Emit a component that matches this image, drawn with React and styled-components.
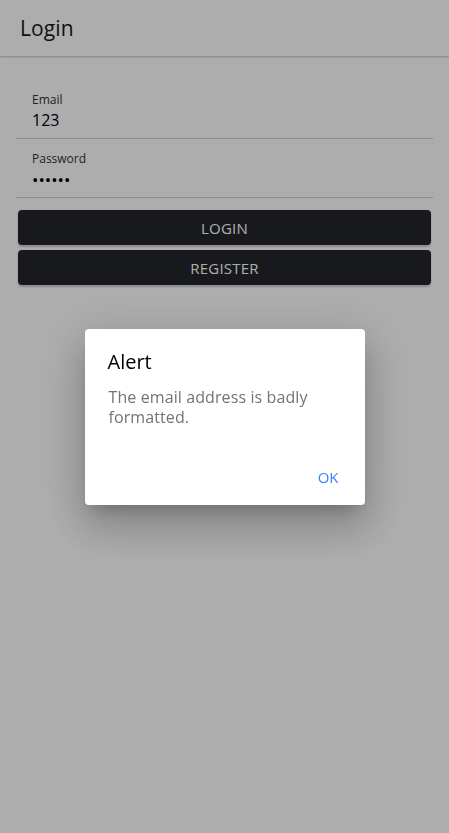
import styled, { createGlobalStyle } from 'styled-components';

const GlobalStyle = createGlobalStyle`
  html, body {
    margin: 0;
    padding: 0;
    height: 100%;
    background: #ffffff;
    font-family: 'Open Sans', 'Noto Sans', sans-serif;
  }
  #root {
    min-height: 100%;
  }
`;

const Page = styled.div`
  position: relative;
  min-height: 100vh;
  background: #ffffff;
`;

const Header = styled.header`
  height: 56px;
  display: flex;
  align-items: center;
  padding: 0 20px;
  box-sizing: border-box;
  background: #ffffff;
  box-shadow: 0 1px 2px rgba(0, 0, 0, 0.25);
  .title {
    font-size: 21px;
    font-weight: 400;
    color: #1a1a1a;
    letter-spacing: 0.1px;
  }
`;

const Form = styled.form`
  padding: 24px 16px 0 16px;
  display: flex;
  flex-direction: column;
`;

const Field = styled.label`
  display: flex;
  flex-direction: column;
  padding: 12px 16px 0 16px;
  height: 59px;
  box-sizing: border-box;
  border-bottom: 1px solid #d0d0d0;
  .label {
    font-size: 12px;
    color: #333;
    line-height: 16px;
  }
  .value {
    margin-top: ${({ secret }) => (secret ? '3px' : '2px')};
    font-size: ${({ secret }) => (secret ? '17px' : '16px')};
    color: #000;
    line-height: 20px;
  }
`;

const ButtonGroup = styled.div`
  display: flex;
  flex-direction: column;
  gap: 5px;
  padding: 12px 2px 0 2px;
`;

const Button = styled.button`
  height: 35px;
  border: none;
  border-radius: 4px;
  background: #24262b;
  color: #ffffff;
  font-family: 'Open Sans', 'Noto Sans', sans-serif;
  font-size: 15px;
  font-weight: 500;
  letter-spacing: 0.2px;
  box-shadow: 0 2px 2px rgba(0, 0, 0, 0.2);
`;

const Backdrop = styled.div`
  position: fixed;
  inset: 0;
  background: rgba(0, 0, 0, 0.32);
  display: flex;
  align-items: center;
  justify-content: center;
`;

const Dialog = styled.div`
  width: 280px;
  height: 176px;
  box-sizing: border-box;
  background: #ffffff;
  border-radius: 4px;
  box-shadow: 0 11px 15px -7px rgba(0, 0, 0, 0.2), 0 24px 38px 3px rgba(0, 0, 0, 0.14),
    0 9px 46px 8px rgba(0, 0, 0, 0.12);
  display: flex;
  flex-direction: column;
  .dialog_title {
    margin: 0;
    padding: 20px 23px 12px 23px;
    font-size: 20px;
    font-weight: 400;
    color: #000;
    line-height: 26px;
  }
  .dialog_message {
    margin: 0;
    padding: 0 24px;
    font-size: 16px;
    line-height: 20px;
    color: #737373;
    letter-spacing: 0.1px;
  }
`;

const DialogActions = styled.div`
  margin-top: auto;
  display: flex;
  justify-content: flex-end;
  padding: 0 8px 8px 8px;
  button {
    background: none;
    border: none;
    padding: 10px 18px;
    font-family: 'Open Sans', 'Noto Sans', sans-serif;
    font-size: 15px;
    color: #3880ff;
    line-height: 20px;
  }
`;

const App = () => {
  return (
    <Page>
      <GlobalStyle />
      <Header>
        <span className="title">Login</span>
      </Header>
      <Form onSubmit={(e) => e.preventDefault()}>
        <Field>
          <span className="label">Email</span>
          <span className="value">123</span>
        </Field>
        <Field secret>
          <span className="label">Password</span>
          <span className="value">••••••</span>
        </Field>
        <ButtonGroup>
          <Button type="submit">LOGIN</Button>
          <Button type="button">REGISTER</Button>
        </ButtonGroup>
      </Form>
      <Backdrop>
        <Dialog>
          <h2 className="dialog_title">Alert</h2>
          <p className="dialog_message">The email address is badly formatted.</p>
          <DialogActions>
            <button>OK</button>
          </DialogActions>
        </Dialog>
      </Backdrop>
    </Page>
  );
};

export default App;
